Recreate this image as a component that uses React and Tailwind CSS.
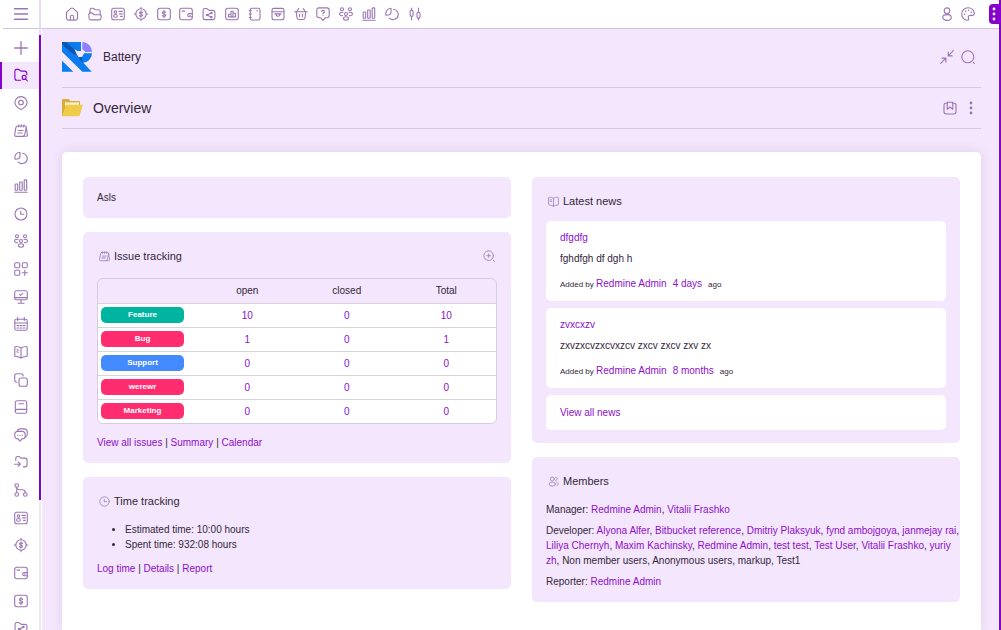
import React from "react";

const ICONS = {
  menu: <path strokeWidth="1.5" d="M0.5 1.700h13M0.5 7h13M0.5 12.300h13" />,
  plus: <path strokeWidth="1.300" d="M7 0.7v12.600M0.7 7h12.600" />,
  folderSearch: (
    <>
      <path d="M6.6 12.3H2.9A2 2 0 0 1 0.9 10.3V3.2A1.8 1.8 0 0 1 2.7 1.4h1.6c1.3 0 1.4 1.7 3 1.7h3.2c1.5 0 2.3 0.9 2.3 2.4v1.2" />
      <circle cx="10.1" cy="9.4" r="2" />
      <path d="M11.6 11l1.8 2" />
    </>
  ),
  pin: (
    <>
      <path d="M7 13.4C4.600 12.500 0.900 9.700 0.900 6.500a6.100 5.900 0 0 1 12.200 0C13.100 9.700 9.400 12.500 7 13.400z" />
      <circle cx="7" cy="6.500" r="2.300" />
    </>
  ),
  note: (
    <>
      <path d="M3.300 2h7.600c1 0 1.500 0.700 1.300 1.700l-1.500 7c-0.200 1-0.900 1.700-2 1.700H2c-1 0-1.600-0.700-1.300-1.700L1.900 3.600C2.100 2.600 2.500 2 3.300 2z" />
      <path d="M4.800 0.800L4.400 3M7.400 0.800L7 3M10 0.800L9.600 3M4.300 6.500h4.800M3.700 9h4.500M12.400 3.500l1 7.500c0.100 0.800-0.300 1.300-1 1.300H9" />
    </>
  ),
  pie: (
    <>
      <path d="M6 1.200v3.900c0 1.600-1 2.700-2.600 2.900L1.100 8.300C0 5 2.200 1.300 6 1.200z" />
      <path d="M8.700 2.300c3.400 0.600 5 3.700 4.400 6.400-0.700 3.600-5.900 5.200-8.900 2.500" />
    </>
  ),
  bars: (
    <>
      <path d="M0.800 13.300h12.400" />
      <rect x="1.200" y="5" width="2.500" height="6.300" rx="0.600" />
      <rect x="5.700" y="3" width="2.500" height="8.300" rx="0.600" />
      <rect x="10.200" y="0.900" width="2.500" height="10.400" rx="0.600" />
    </>
  ),
  clock: (
    <>
      <circle cx="7" cy="7" r="6" />
      <path d="M6.700 4.200v3.100h3" />
    </>
  ),
  users: (
    <>
      <circle cx="3" cy="2.300" r="1.500" />
      <circle cx="11" cy="2.300" r="1.500" />
      <circle cx="7" cy="7" r="1.500" />
      <ellipse cx="7" cy="11.500" rx="2.500" ry="1.700" />
      <path d="M3.900 5.500C2 4.900 0.600 5.800 0.600 7s1.200 2 2.900 1.600M10.100 5.500c1.900-0.600 3.300 0.300 3.300 1.500s-1.200 2-2.900 1.600" />
    </>
  ),
  gridPlus: (
    <>
      <rect x="0.700" y="0.700" width="5" height="5" rx="1.100" />
      <rect x="8.300" y="0.700" width="5" height="5" rx="1.100" />
      <rect x="0.700" y="8.300" width="5" height="5" rx="1.100" />
      <path d="M10.800 8.200v5.200M8.200 10.800h5.200" />
    </>
  ),
  monitor: (
    <>
      <rect x="0.700" y="0.800" width="12.600" height="9" rx="1.800" />
      <path d="M0.900 7.600h12.200M7 10v3.200M4 13.300h6M5.600 4.500l1 0.900 2.200-2" />
    </>
  ),
  calendar: (
    <>
      <rect x="0.800" y="2.200" width="12.400" height="11" rx="1.800" />
      <path d="M3.700 0.600v2.800M10.300 0.600v2.800M0.900 6h12.200M3 8.600h1.800M6.100 8.600h1.800M9.200 8.600H11M3 11h1.800M6.100 11h1.800M9.200 11H11" />
    </>
  ),
  book: (
    <>
      <path d="M7 3c-1.500-1-3.300-1.500-5.200-1.500-0.700 0-1 0.400-1 1v8c0 0.700 0.300 1 1 1 1.900 0.100 3.700 0.500 5.200 1.600 1.500-1.100 3.300-1.500 5.200-1.600 0.700 0 1-0.300 1-1v-8c0-0.600-0.300-1-1-1C10.300 1.500 8.500 2 7 3zM7 3v10" />
      <path d="M2.800 4.700l1.900 0.500M2.800 6.800l1.500 0.400" />
    </>
  ),
  copy: (
    <>
      <rect x="5" y="5" width="8.300" height="8.300" rx="2" />
      <path d="M3 9.200C1.500 9.100 0.700 8.200 0.700 6.900V3c0-1.500 0.800-2.300 2.300-2.300h3.900C8.300 0.700 9.100 1.500 9.200 3" />
    </>
  ),
  manual: (
    <>
      <rect x="1.300" y="0.800" width="11.400" height="12.400" rx="1.800" />
      <path d="M1.400 10.800c0-1 0.600-1.400 1.600-1.400h9.600M5 3.800h4.500" />
    </>
  ),
  chat: (
    <>
      <path d="M3.300 3.300C3.600 1.800 5 0.900 6.500 0.900h3.300c2.100 0 3.500 1.400 3.500 3.300v2c0 1.500-0.800 2.500-2 3" />
      <path d="M3.900 3.400h4c2 0 3.300 1.200 3.300 3v1.500c0 1.900-1.300 3-3.300 3L6.200 12.800c-0.300 0.400-0.700 0.300-0.900-0.100L4.600 10.900H3.900C2 10.900 0.800 9.800 0.800 7.900V6.400c0-1.800 1.200-3 3.100-3z" />
      <path d="M3.500 7.200h0.300M5.800 7.200h0.300M8.100 7.200h0.300" />
    </>
  ),
  folderArrow: (
    <>
      <path d="M1.800 5.500V3.300c0-1.100 0.700-1.800 1.800-1.800h1.200c1.300 0 1.500 1.600 2.900 1.600h3.100c1.500 0 2.300 0.800 2.300 2.200v4.300c0 1.500-0.800 2.300-2.300 2.300h-1.500" />
      <path d="M0.600 9.200h5.600M4.200 7l2.200 2.200-2.200 2.200" />
    </>
  ),
  branch: (
    <>
      <circle cx="2.700" cy="2.500" r="1.800" />
      <circle cx="2.700" cy="11.500" r="1.800" />
      <circle cx="11.300" cy="11.500" r="1.800" />
      <path d="M2.700 4.400v5.200M2.800 5c0.300 1.300 1.200 1.800 2.700 1.800h2.700c2 0 3 1 3.100 2.800" />
    </>
  ),
  idCard: (
    <>
      <rect x="0.700" y="1.200" width="12.600" height="11.600" rx="2" />
      <circle cx="4.500" cy="5" r="1.300" />
      <ellipse cx="4.500" cy="8.900" rx="1.900" ry="1.400" />
      <path d="M8 4.400h3.300M8.600 6.900h2.700M9.600 9.400h1.700" />
    </>
  ),
  coin: (
    <>
      <circle cx="7" cy="7" r="5.200" />
      <path d="M7 0.200v1.600M7 12.200v1.600M0.200 7h1.600M12.200 7h1.600" />
      <path d="M8.500 5.500C8.200 4.900 7.700 4.700 7 4.700c-0.900 0-1.500 0.400-1.500 1.100 0 1.500 3 0.900 3 2.400 0 0.700-0.600 1.100-1.500 1.100-0.800 0-1.300-0.300-1.600-0.900M7 3.800v6.400" />
    </>
  ),
  wallet: (
    <>
      <rect x="0.700" y="1.200" width="12.600" height="11.600" rx="2.200" />
      <path d="M3 4.100h2.800M13.300 6.600h-3c-1 0-1.600 0.700-1.600 1.600s0.600 1.600 1.600 1.600h3M10.700 8.200h0.500" />
    </>
  ),
  dollar: (
    <>
      <rect x="0.700" y="1.200" width="12.600" height="11.600" rx="2.200" />
      <path d="M8.700 5.400C8.400 4.800 7.800 4.500 7 4.500c-1 0-1.700 0.500-1.700 1.200 0 1.700 3.400 1 3.400 2.600 0 0.700-0.700 1.200-1.700 1.200-0.900 0-1.500-0.300-1.800-0.900M7 3.400v7.200" />
    </>
  ),
  shareFolder: (
    <>
      <path d="M1.100 10.600V3c0-0.900 0.600-1.500 1.500-1.500h1.800c1.300 0 1.700 1.900 3 1.900h3.400c1.400 0 2.100 0.700 2.100 2v5.300c0 1.200-0.700 1.900-1.900 1.900H3c-1.200 0-1.900-0.700-1.900-2z" />
      <path d="M9.200 6L5.300 8l3.900 2.200" />
      <circle cx="9.400" cy="5.900" r="0.700" />
      <circle cx="5" cy="8" r="0.700" />
      <circle cx="9.400" cy="10.200" r="0.700" />
    </>
  ),
  home: (
    <path d="M1.500 6.200c0-0.800 0.300-1.400 0.900-1.900l3.200-2.700c0.900-0.700 1.900-0.700 2.800 0l3.200 2.700c0.600 0.500 0.900 1.100 0.900 1.900v5c0 1.200-0.700 1.900-1.900 1.900H3.400c-1.200 0-1.900-0.700-1.900-1.900zM5.400 13V9.700c0-1 0.600-1.500 1.600-1.500s1.600 0.500 1.600 1.500V13" />
  ),
  files: (
    <>
      <path d="M2 6V2.800C2 1.900 2.600 1.300 3.500 1.300h1.600c1.100 0 1.300 1.400 2.500 1.400h2.800c1.200 0 1.800 0.700 1.800 1.800v3.200" />
      <path d="M0.800 7.400c0-1 0.600-1.500 1.500-1.500h1.300c1.400 0 1.500 1.900 3 1.900h5.200c1 0 1.500 0.600 1.400 1.600l-0.200 1.700c-0.100 1.200-0.900 1.800-2 1.800H3C1.900 12.900 1.200 12.300 1.100 11.200z" />
    </>
  ),
  chartBadge: (
    <>
      <rect x="0.700" y="1.200" width="12.600" height="11.600" rx="2.200" />
      <path d="M3.600 9.900V7.300H6M6 9.700V4.300h2v5.400M8 6.300h2.400v3.600H3.600" />
    </>
  ),
  notebook: (
    <>
      <rect x="2.300" y="1.200" width="9.700" height="11.800" rx="1.500" />
      <path d="M1.300 3.600h2M1.300 7h2M1.300 10.500h2M8.700 3.800h0.900" />
    </>
  ),
  store: (
    <>
      <rect x="1" y="1.400" width="12" height="11.400" rx="2" />
      <path d="M1.200 4.700h11.600M4 6.900h6M5 7c0 1.500 0.800 2.200 2 2.200S9 8.500 9 7" />
    </>
  ),
  basket: (
    <>
      <path d="M0.700 4.700h12.600M2.200 4.900l0.800 5.900c0.200 1.200 0.800 1.700 2 1.700h4c1.200 0 1.800-0.500 2-1.700l0.800-5.900M2.800 4.500l1.900-3M11.200 4.500l-1.900-3" />
      <path d="M5.500 7.400v2.400M8.500 7.400v2.400" />
    </>
  ),
  question: (
    <>
      <path d="M3 0.900h8c1.400 0 2.200 0.800 2.200 2.200v5.500c0 1.400-0.800 2.200-2.200 2.200H9.300L7 13.300 4.700 10.800H3c-1.400 0-2.200-0.800-2.200-2.200V3.100C0.800 1.700 1.600 0.900 3 0.900z" />
      <path d="M5.600 4.500c0.100-0.700 0.600-1.100 1.400-1.100 0.900 0 1.400 0.500 1.400 1.200C8.400 5.500 7 5.600 7 6.800M7 8.500v0.200" />
    </>
  ),
  candles: (
    <>
      <rect x="2.100" y="3.400" width="3" height="5.800" rx="1.300" />
      <rect x="9" y="5.300" width="3" height="5.800" rx="1.300" />
      <path d="M3.600 1v2.300M3.600 9.300v3.500M10.500 1v4.200M10.500 11.200V13" />
    </>
  ),
  person: (
    <>
      <circle cx="7" cy="3.700" r="2.800" />
      <ellipse cx="7" cy="10.500" rx="4.300" ry="2.900" />
    </>
  ),
  palette: (
    <>
      <path d="M7 0.800C3.400 0.800 0.700 3.500 0.700 7s2.500 6.200 5.600 6.200c1 0 1.400-0.500 1.400-1.300 0-1-0.600-1.300-0.400-2.200C7.500 8.800 8.300 8.400 9.200 8.400h2c1.300 0 2.100-0.600 2.100-1.900C13.300 3.200 10.500 0.800 7 0.800z" />
      <path strokeWidth="1.500" d="M3.500 7.200h0.100M4.500 4.200h0.100M7.500 3.300h0.100M10.200 5.300h0.100" />
    </>
  ),
  shrink: (
    <path d="M13.300 0.700L8.200 5.800M8.200 2v3.900h3.900M0.700 13.300l5.100-5.100M1.900 8.100h4v4" />
  ),
  search: (
    <>
      <circle cx="6.800" cy="6.800" r="6" />
      <path d="M12.300 12.300l1 1" />
    </>
  ),
  zoomIn: (
    <>
      <circle cx="6.600" cy="6.600" r="5.600" />
      <path d="M12 12l1.300 1.300M6.600 4.600v4M4.600 6.600h4" />
    </>
  ),
  bookmark: (
    <>
      <path d="M4 2.300H3C1.700 2.300 1 3 1 4.200v6.600c0 1.400 0.800 2.200 2.200 2.200h7.600c1.400 0 2.200-0.800 2.200-2.200V4.200c0-1.200-0.700-1.900-2-1.900h-1" />
      <path d="M4.200 1.200h5.600v7L7 6 4.200 8.200z" />
    </>
  ),
  members: (
    <>
      <circle cx="5.400" cy="3.800" r="2.500" />
      <ellipse cx="5.400" cy="10.300" rx="4" ry="2.600" />
      <path d="M9.600 1.600c2.700 0.300 2.700 3.900 0.200 4.300M11 8c2.700 0.700 2.900 3.300 0.300 4.300" />
    </>
  ),
};

function Icon({ name, className = "size-3.5" }) {
  return (
    <svg
      viewBox="0 0 14 14"
      className={`shrink-0 overflow-visible ${className}`}
      fill="none"
      stroke="currentColor"
      strokeWidth="1.1"
      strokeLinecap="round"
      strokeLinejoin="round"
      aria-hidden="true"
    >
      {ICONS[name]}
    </svg>
  );
}

const SIDE = [
  ["plus", "Add"],
  ["folderSearch", "Overview"],
  ["pin", "Activity"],
  ["note", "Issues"],
  ["pie", "Reports"],
  ["bars", "Statistics"],
  ["clock", "Spent time"],
  ["users", "Team"],
  ["gridPlus", "Boards"],
  ["monitor", "Monitor"],
  ["calendar", "Calendar"],
  ["book", "News"],
  ["copy", "Documents"],
  ["manual", "Wiki"],
  ["chat", "Forums"],
  ["folderArrow", "Files"],
  ["branch", "Repository"],
  ["idCard", "Contacts"],
  ["coin", "Deals"],
  ["wallet", "Invoices"],
  ["dollar", "Expenses"],
  ["shareFolder", "Shared"],
];

const TOP = [
  ["home", "Home"],
  ["files", "Projects"],
  ["idCard", "Contacts"],
  ["coin", "Deals"],
  ["dollar", "Expenses"],
  ["wallet", "Invoices"],
  ["shareFolder", "Shared"],
  ["chartBadge", "Charts"],
  ["notebook", "Notebook"],
  ["store", "Products"],
  ["basket", "Orders"],
  ["question", "Help"],
  ["users", "Team"],
  ["bars", "Statistics"],
  ["pie", "Reports"],
  ["candles", "Trends"],
];

const ROWS = [
  ["Feature", "bg-[#00b5a0]", 10, 0, 10],
  ["Bug", "bg-[#ff2d6f]", 1, 0, 1],
  ["Support", "bg-[#448aff]", 0, 0, 0],
  ["werewr", "bg-[#ff2d6f]", 0, 0, 0],
  ["Marketing", "bg-[#ff2d6f]", 0, 0, 0],
];

const NEWS = [
  ["dfgdfg", "fghdfgh df dgh h", "4 days"],
  ["zvxcxzv", "zxvzxcvzxcvxzcv zxcv zxcv zxv zx", "8 months"],
];

const DEVELOPERS = [
  "Alyona Alfer",
  "Bitbucket reference",
  "Dmitriy Plaksyuk",
  "fynd ambojgoya",
  "janmejay rai",
  "Liliya Chernyh",
  "Maxim Kachinsky",
  "Redmine Admin",
  "test test",
  "Test User",
  "Vitalii Frashko",
  "yuriy zh",
];

function A({ children }) {
  return (
    <a href="#" className="text-[#8c0fcb]">
      {children}
    </a>
  );
}

function Panel({ className = "", children }) {
  return <section className={`rounded-[5px] bg-[#f4e6fc] px-3.5 ${className}`}>{children}</section>;
}

function Title({ icon, children }) {
  return (
    <h3 className="flex items-center gap-1 pl-0.5 text-[11px] leading-4 text-[#33273b]">
      <Icon name={icon} className="size-[11px] text-[#a184b8]" />
      {children}
    </h3>
  );
}

function Logo() {
  return (
    <svg viewBox="0 0 90 90" className="size-[30px]" aria-hidden="true">
      <path fill="#0a7cf0" d="M0 0H57V28L48 32 52 46 62 60 89 89H61L0 29z" />
      <path fill="#0a7cf0" d="M0 56L34 89H0zM62 34H90A30 30 0 0 1 60 63L46 46z" />
      <path fill="#0b55b0" d="M12 0L46 30 40 40 22 28 0 6V0zM48 44L60 48 62 62z" />
      <path fill="#0a7cf0" d="M24 0H57V22H46z" />
      <path fill="#8b80ff" d="M61 0A30 30 0 0 1 90 30H70L61 21z" />
      <path fill="#f4e6fc" d="M37 22l9 5h14l6 7-5 10-11 2-6-10z" />
    </svg>
  );
}

function Folder() {
  return (
    <svg viewBox="0 0 63 54" className="h-[18px] w-[21px]" aria-hidden="true">
      <path fill="#d9ae38" d="M0 3c0-2 1-3 3-3h17l5 6h26c2 0 3 1 3 3v8L4 52c-3 0-4-1-4-3z" />
      <path fill="#f7eecb" d="M9 10h42v10H9z" />
      <path fill="#eecb48" d="M14 17h46c2 0 3 1 2 3L53 49c-1 2-2 3-4 3H3c-2 0-2-1-2-3L11 20c0-2 1-3 3-3z" />
    </svg>
  );
}

function Dots() {
  return (
    <svg viewBox="0 0 4 14" className="h-3.5 w-1" fill="currentColor" aria-hidden="true">
      <circle cx="2" cy="2" r="1.400" />
      <circle cx="2" cy="7" r="1.400" />
      <circle cx="2" cy="12" r="1.400" />
    </svg>
  );
}

export default function App() {
  return (
    <div className="flex h-screen overflow-hidden bg-white font-['Liberation_Sans',Arial,sans-serif] text-[10px] leading-[15px] text-[#33273b]">
      <aside className="flex w-[39px] shrink-0 flex-col text-[#9a76b3]">
        <div className="ml-[3px] flex h-[29px] shrink-0 items-center justify-center border-b border-[#d3c4dd]">
          <button type="button" aria-label="Menu" className="flex">
            <Icon name="menu" />
          </button>
        </div>
        <nav className="mt-[5px] flex h-[608px] shrink-0 flex-col">
          {SIDE.map(([name, label]) => (
            <a
              key={label}
              href="#"
              aria-label={label}
              className={`flex flex-1 items-center justify-center ${
                name === "folderSearch"
                  ? "border-l-2 border-[#8800cc] bg-[#f4e6fc] text-[#8800cc]"
                  : "border-l-2 border-transparent"
              }`}
            >
              <Icon name={name} />
            </a>
          ))}
        </nav>
      </aside>
      <div className="flex w-0.5 shrink-0 flex-col bg-[#eee9f1]">
        <div className="h-[35px] bg-[#e6dcec]" />
        <div className="h-[465px] bg-[#8300cc]" />
      </div>

      <div className="flex min-w-0 flex-1 flex-col">
        <header className="flex h-[29px] shrink-0 items-center border-b border-[#d3c4dd] pl-5 text-[#9a76b3]">
          <nav className="flex w-[365px]">
            {TOP.map(([name, label]) => (
              <a key={label} href="#" aria-label={label} className="flex flex-1 justify-center">
                <Icon name={name} />
              </a>
            ))}
          </nav>
          <div className="ml-auto flex items-center gap-[7px]">
            <a href="#" aria-label="Account">
              <Icon name="person" />
            </a>
            <a href="#" aria-label="Theme">
              <Icon name="palette" />
            </a>
            <button
              type="button"
              aria-label="More"
              className="ml-[7px] flex h-5 w-2.5 items-center justify-center rounded-l-[4px] bg-[#8800cc] text-white"
            >
              <Dots />
            </button>
          </div>
        </header>

        <main className="flex min-h-0 flex-1 flex-col border-x border-white bg-[#f4e6fc] pr-[17px] pl-5">
          <div className="flex h-[59px] shrink-0 items-center gap-[11px] border-b border-[#d6c9de] pb-0.5">
            <Logo />
            <h1 className="text-[12px] leading-4">Battery</h1>
            <div className="mr-1.5 ml-auto flex gap-[7px] text-[#9a76b3]">
              <button type="button" aria-label="Collapse">
                <Icon name="shrink" />
              </button>
              <button type="button" aria-label="Search">
                <Icon name="search" />
              </button>
            </div>
          </div>
          <div className="flex h-[41px] shrink-0 items-center gap-2.5 border-b border-[#d6c9de]">
            <Folder />
            <h2 className="text-[14px] leading-5">Overview</h2>
            <div className="mr-2 ml-auto flex items-center gap-3 text-[#9a76b3]">
              <button type="button" aria-label="Bookmark">
                <Icon name="bookmark" />
              </button>
              <button type="button" aria-label="Options">
                <Dots />
              </button>
            </div>
          </div>

          <div className="mt-[23px] grid min-h-0 flex-1 grid-cols-2 items-start gap-[21px] rounded-t-[5px] bg-white px-[21px] pt-[25px] shadow-[0_0_12px_rgba(120,80,150,0.15)]">
            <div className="flex min-w-0 flex-col gap-3.5">
              <Panel className="py-[13px]">Asls</Panel>

              <Panel className="pt-4 pb-[13px]">
                <div className="flex items-center justify-between pr-0.5">
                  <Title icon="note">Issue tracking</Title>
                  <button type="button" aria-label="Details" className="text-[#a184b8]">
                    <Icon name="zoomIn" className="size-3" />
                  </button>
                </div>
                <div className="mt-3.5 overflow-hidden rounded-[6px] border border-[#d8ccdf]">
                  <table className="w-full table-fixed text-center">
                    <thead>
                      <tr className="h-6">
                        <th aria-label="Tracker" />
                        <th className="font-normal">open</th>
                        <th className="font-normal">closed</th>
                        <th className="font-normal">Total</th>
                      </tr>
                    </thead>
                    <tbody className="bg-white">
                      {ROWS.map(([name, color, open, closed, total]) => (
                        <tr key={name} className="h-6 border-t border-[#d8d4da]">
                          <td className="pl-[3px]">
                            <a
                              href="#"
                              className={`block w-[83px] rounded-[5px] text-[8px] leading-4 font-bold text-white ${color}`}
                            >
                              {name}
                            </a>
                          </td>
                          <td><A>{open}</A></td>
                          <td><A>{closed}</A></td>
                          <td><A>{total}</A></td>
                        </tr>
                      ))}
                    </tbody>
                  </table>
                </div>
                <p className="mt-[11px]">
                  <A>View all issues</A> | <A>Summary</A> | <A>Calendar</A>
                </p>
              </Panel>

              <Panel className="pt-4 pb-[13px]">
                <Title icon="clock">Time tracking</Title>
                <ul className="mt-[13px] list-disc pl-7">
                  <li>Estimated time: 10:00 hours</li>
                  <li>Spent time: 932:08 hours</li>
                </ul>
                <p className="mt-[9px]">
                  <A>Log time</A> | <A>Details</A> | <A>Report</A>
                </p>
              </Panel>
            </div>

            <div className="flex min-w-0 flex-col gap-3.5">
              <Panel className="pt-4 pb-[13px]">
                <Title icon="book">Latest news</Title>
                <div className="mt-3 flex flex-col gap-[7px]">
                  {NEWS.map(([title, text, age]) => (
                    <article key={title} className="rounded-[5px] bg-white px-3.5 py-[9px]">
                      <h4><A>{title}</A></h4>
                      <p className="mt-1.5">{text}</p>
                      <p className="mt-2.5 text-[8px]">
                        Added by <span className="text-[10px]"><A>Redmine Admin</A></span>
                        <span className="mx-1.5 text-[10px]"><A>{age}</A></span>
                        ago
                      </p>
                    </article>
                  ))}
                  <div className="rounded-[5px] bg-white px-3.5 py-2.5">
                    <A>View all news</A>
                  </div>
                </div>
              </Panel>

              <Panel className="pt-4 pb-[13px]">
                <Title icon="members">Members</Title>
                <p className="mt-[13px]">
                  Manager: <A>Redmine Admin</A>, <A>Vitalii Frashko</A>
                </p>
                <p className="-mr-3.5 mt-1.5">
                  Developer:{" "}
                  {DEVELOPERS.map((n) => (
                    <React.Fragment key={n}>
                      <A>{n}</A>,{" "}
                    </React.Fragment>
                  ))}
                  Non member users, Anonymous users, markup, Test1
                </p>
                <p className="mt-1.5">
                  Reporter: <A>Redmine Admin</A>
                </p>
              </Panel>
            </div>
          </div>
        </main>
      </div>
      <div className="w-0.5 shrink-0 bg-[#8800cc]" />
    </div>
  );
}
